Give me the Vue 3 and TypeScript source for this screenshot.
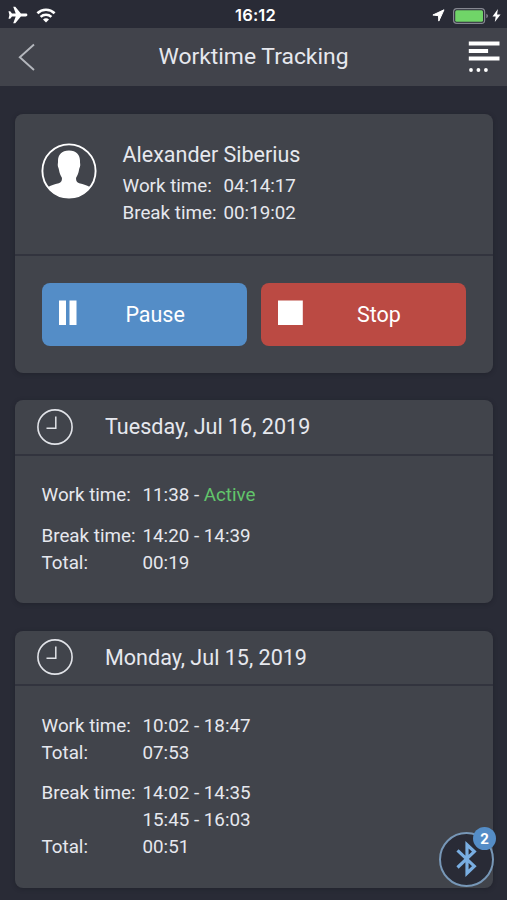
<script setup lang="ts">
interface Entry {
  label: string
  value: string
  status?: string
}

interface Day {
  title: string
  groups: Entry[][]
}

const summary: Entry[] = [
  { label: 'Work time:', value: '04:14:17' },
  { label: 'Break time:', value: '00:19:02' },
]

const days: Day[] = [
  {
    title: 'Tuesday, Jul 16, 2019',
    groups: [
      [{ label: 'Work time:', value: '11:38 - ', status: 'Active' }],
      [
        { label: 'Break time:', value: '14:20 - 14:39' },
        { label: 'Total:', value: '00:19' },
      ],
    ],
  },
  {
    title: 'Monday, Jul 15, 2019',
    groups: [
      [
        { label: 'Work time:', value: '10:02 - 18:47' },
        { label: 'Total:', value: '07:53' },
      ],
      [
        { label: 'Break time:', value: '14:02 - 14:35' },
        { label: '', value: '15:45 - 16:03' },
        { label: 'Total:', value: '00:51' },
      ],
    ],
  },
]
</script>

<template>
  <div class="screen">
    <div class="status-bar">
      <div class="status-left">
        <svg class="plane" width="20" height="18" viewBox="0 0 20 18">
          <path d="M19.4 9c0-.9-.8-1.400-1.700-1.400h-4.800L7.300.800H5.200l2.500 6.700H4L2.200 5.200H.5L1.400 9 .5 12.800h1.700L4 10.500h3.700L5.200 17.200h2.100l5.600-6.800h4.800c.9 0 1.700-.5 1.700-1.400z" fill="#fff" />
        </svg>
        <svg class="wifi" width="20" height="15" viewBox="0 0 20 15">
          <path d="M1.400 5.200a12.400 12.400 0 0 1 17.200 0" fill="none" stroke="#fff" stroke-width="2.600" />
          <path d="M4.600 8.800a7.900 7.900 0 0 1 10.800 0" fill="none" stroke="#fff" stroke-width="2.500" />
          <path d="M10 14.400 7 11.500a4.200 4.200 0 0 1 6 0z" fill="#fff" />
        </svg>
      </div>
      <time class="clock-text">16:12</time>
      <div class="status-right">
        <svg class="location" width="13" height="13" viewBox="0 0 13 13">
          <path d="M12 .8.900 6l5.600.700.300 5.400z" fill="#fff" stroke="#fff" stroke-width="1" stroke-linejoin="round" />
        </svg>
        <svg class="battery" width="36" height="16" viewBox="0 0 36 16">
          <rect x=".6" y=".6" width="31" height="14.800" rx="3.200" fill="none" stroke="#858790" stroke-width="1.200" />
          <rect x="2.200" y="2.200" width="27.800" height="11.600" rx="1.500" fill="#70d568" />
          <path d="M33.300 5.800c2.200.8 2.200 3.600 0 4.400z" fill="#858790" />
        </svg>
        <svg class="bolt" width="9" height="13" viewBox="0 0 9 13">
          <path d="M5.900 0 .500 7.500h3.200l-.9 5.500 5.800-7.600H5.100z" fill="#fff" />
        </svg>
      </div>
    </div>

    <header class="nav-bar">
      <button class="back" aria-label="Back">
        <svg width="18" height="28" viewBox="0 0 18 28">
          <path d="M17 1.500 2.800 14.300 17 27" fill="none" stroke="#b4b7bd" stroke-width="1.900" />
        </svg>
      </button>
      <h1>Worktime Tracking</h1>
      <button class="menu" aria-label="Menu">
        <svg width="32" height="32" viewBox="0 0 32 32">
          <path d="M.800 2.500h30.700M.800 10h19.300M.800 17.600h30.700" stroke="#fff" stroke-width="4" />
          <g fill="#fff">
            <circle cx="3" cy="29" r="1.900" />
            <circle cx="10.400" cy="29" r="1.900" />
            <circle cx="17.900" cy="29" r="1.900" />
          </g>
        </svg>
      </button>
    </header>

    <main>
      <section class="card current">
        <div class="profile">
          <svg class="avatar" width="56" height="56" viewBox="0 0 56 56">
            <circle cx="28" cy="28" r="26.600" fill="none" stroke="#fff" stroke-width="1.900" />
            <path d="M28 7.500c-7.700 0-11.300 4.700-11 11.300.100 1.200-.400 1.800-.200 3.700.2 1.900.8 2.200 1.200 4.500.5 3.400 1.600 5.500 2.900 7.700.3 2.900-.5 4.700-3.100 5.500-4.300 1.200-8.200 2-11.200 4.300a27 27 0 0 0 42.800 0c-3-2.300-6.900-3.100-11.200-4.300-2.600-.8-3.400-2.600-3.100-5.500 1.300-2.200 2.400-4.300 2.900-7.700.4-2.300 1-2.600 1.200-4.500.2-1.900-.3-2.500-.2-3.700C39.300 12.200 35.700 7.500 28 7.500z" fill="#fff" />
          </svg>
          <div class="details">
            <h2>Alexander Siberius</h2>
            <div v-for="item in summary" :key="item.label" class="row">
              <span>{{ item.label }}</span>
              <span>{{ item.value }}</span>
            </div>
          </div>
        </div>
        <div class="actions">
          <button class="action pause">
            <svg width="26" height="26" viewBox="0 0 26 26">
              <path d="M0 .500h7v24.500H0zM10.500.500h7v24.500h-7z" fill="#fff" />
            </svg>
            <span>Pause</span>
          </button>
          <button class="action stop">
            <svg width="26" height="26" viewBox="0 0 26 26">
              <path d="M0 .500h24.800v24.500H0z" fill="#fff" />
            </svg>
            <span>Stop</span>
          </button>
        </div>
      </section>

      <section v-for="day in days" :key="day.title" class="card day">
        <div class="day-header">
          <svg width="36" height="36" viewBox="0 0 36 36" fill="none" stroke="#e1e3e8">
            <circle cx="18" cy="18" r="17.100" stroke-width="1.600" />
            <path d="M18.800 7.400v11.900h-9.300" stroke-width="1.500" />
          </svg>
          <h2>{{ day.title }}</h2>
        </div>
        <div class="day-body">
          <div v-for="(group, index) in day.groups" :key="index" class="group">
            <div v-for="item in group" :key="item.value" class="row">
              <span>{{ item.label }}</span>
              <span>{{ item.value }}<em v-if="item.status">{{ item.status }}</em></span>
            </div>
          </div>
        </div>
      </section>
    </main>

    <button class="bluetooth" aria-label="Bluetooth">
      <svg width="22" height="36" viewBox="0 0 22 36">
        <path d="M1.500 9.300 18.300 25.200 11 32.200V3.800L18.300 10.600 1.500 26.500" fill="none" stroke="#79aee2" stroke-width="3.200" />
      </svg>
      <span class="badge">2</span>
    </button>
  </div>
</template>

<style>
body {
  background: #292b36;
}
</style>

<style scoped>
.screen {
  position: relative;
  box-sizing: border-box;
  width: 507px;
  height: 900px;
  overflow: hidden;
  background: #292b36;
  color: #e6e8ee;
  font-family: Roboto, sans-serif;
}

svg {
  display: block;
  flex: none;
}

button {
  border: 0;
  padding: 0;
  background: none;
  color: inherit;
  font: inherit;
}

h1,
h2 {
  margin: 0;
  font-weight: 400;
}

.status-bar {
  display: grid;
  grid-template-columns: 1fr auto 1fr;
  align-items: center;
  height: 28px;
  padding: 0 6px 0 8px;
  box-sizing: border-box;
}

.status-left,
.status-right {
  display: flex;
  align-items: center;
}

.status-left {
  gap: 8px;
}

.status-right {
  justify-content: flex-end;
  margin-top: 1px;
}

.location {
  margin-right: 8px;
}

.bolt {
  margin-left: 3px;
}

.clock-text {
  margin-left: 2px;
  color: #fff;
  font-family: Inter, sans-serif;
  font-size: 16.500px;
  font-weight: 600;
  line-height: 30px;
  letter-spacing: 0.2px;
}

.nav-bar {
  display: grid;
  grid-template-columns: 60px 1fr 60px;
  align-items: center;
  height: 58px;
  padding: 0 7px 0 17px;
  box-sizing: border-box;
  background: #41434b;
}

.nav-bar h1 {
  justify-self: center;
  margin-right: 10px;
  font-size: 22.900px;
  line-height: 56px;
  white-space: nowrap;
}

.menu {
  justify-self: end;
}

.menu svg {
  margin-top: -1px;
}

main {
  display: flex;
  flex-direction: column;
  gap: 27.500px;
  padding: 28px 14px 0 14.500px;
}

.card {
  border-radius: 8px;
  background: #41444b;
  box-shadow: 0 1px 4px rgba(20, 22, 30, 0.35);
}

.profile {
  display: flex;
  gap: 26px;
  height: 142px;
  padding: 27px 26px 0;
  box-sizing: border-box;
  border-bottom: 2px solid #32343e;
}

.avatar {
  margin-top: 2px;
}

.details h2 {
  height: 32px;
  font-size: 21.500px;
  line-height: 27px;
}

.row {
  display: grid;
  grid-template-columns: 101px auto;
  justify-content: start;
  height: 27px;
  font-size: 18.800px;
  line-height: 27px;
  white-space: pre;
}

.row em {
  color: #62c56b;
  font-style: normal;
}

.actions {
  display: grid;
  grid-template-columns: 1fr 1fr;
  gap: 14px;
  height: 116.500px;
  padding: 27px 27px 26.500px;
  box-sizing: border-box;
}

.action {
  display: grid;
  grid-template-columns: 58px 1fr 36px;
  align-items: center;
  border-radius: 8px;
  color: #fff;
  font-size: 21.500px;
}

.action span {
  padding-bottom: 1px;
}

.action svg {
  margin: -3px 0 0 17px;
}

.pause {
  background: #548dc7;
}

.stop {
  grid-template-columns: 58px 1fr 27px;
  background: #bb4a43;
}

.day-header {
  display: flex;
  align-items: center;
  gap: 32px;
  height: 55.500px;
  padding: 0 22.500px;
  box-sizing: border-box;
  border-bottom: 2px solid #32343e;
}

.day-header h2 {
  font-size: 21.550px;
  line-height: 53px;
}

.day-body {
  display: flex;
  flex-direction: column;
  gap: 13.500px;
  padding: 26.500px 27px;
}

.bluetooth {
  position: absolute;
  left: 439px;
  top: 832px;
  display: flex;
  align-items: center;
  justify-content: center;
  width: 55px;
  height: 55px;
  border: 2px solid #7797b7;
  border-radius: 50%;
  box-sizing: border-box;
  background: #292b36;
}

.bluetooth svg {
  margin-top: -1px;
}

.badge {
  position: absolute;
  top: -7px;
  right: -4px;
  width: 23px;
  height: 23px;
  border-radius: 50%;
  background: #548dc7;
  color: #fff;
  font-size: 15px;
  font-weight: 700;
  line-height: 24px;
  text-align: center;
}
</style>
